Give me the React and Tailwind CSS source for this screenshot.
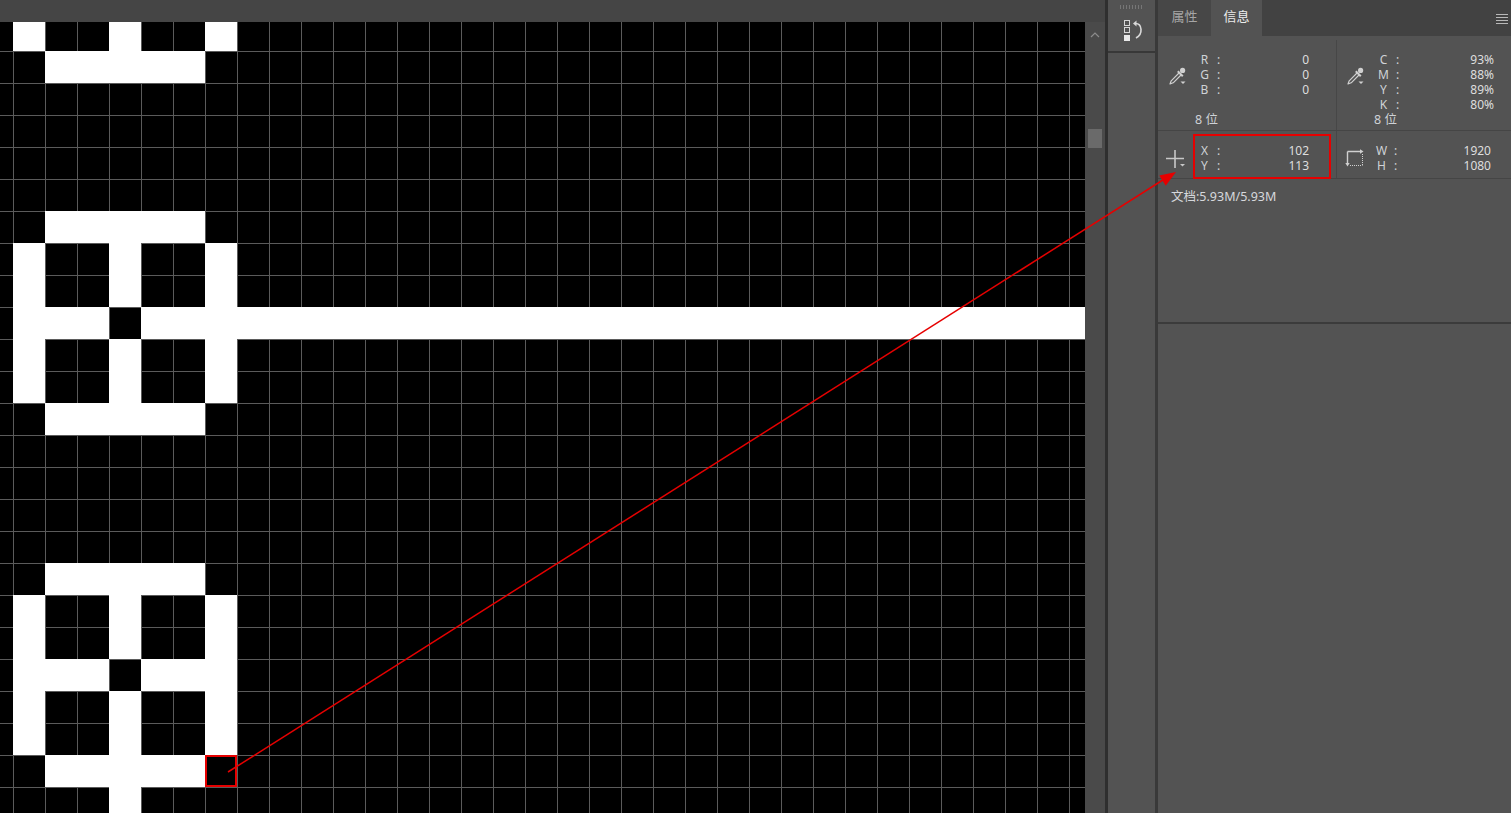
import React from 'react';

// 像素网格：每格 32px，第 0 列起于 x=13，第 0 行起于 y=19（画布内 y=-3）
const A = [[0, 1], [3, 1], [6, 1]];
const whiteRows = [
    [0, A],
    [1, [[1, 5]]],
    [6, [[1, 5]]],
    [7, A],
    [8, A],
    [9, [[0, 3]]],
    [10, A],
    [11, A],
    [12, [[1, 5]]],
    [17, [[1, 5]]],
    [18, A],
    [19, A],
    [20, [[0, 3], [4, 3]]],
    [21, A],
    [22, A],
    [23, [[1, 5]]],
    [24, [[3, 1]]],
];

const PixelCanvas = () => (
    <svg width="1085" height="791" className="block">
        <defs>
            <pattern id="grid" width="32" height="32" patternUnits="userSpaceOnUse" x="13" y="29">
                <path d="M0 0.5H32M0.5 0V32" stroke="#5b5b5b" strokeWidth="1" fill="none" />
            </pattern>
        </defs>
        <rect width="1085" height="791" fill="#000" />
        <rect width="1085" height="791" fill="url(#grid)" />
        {whiteRows.map(([r, spans]) =>
            spans.map(([c, n]) => (
                <rect key={`${r}-${c}`} x={13 + 32 * c} y={32 * r - 3} width={32 * n} height="32" fill="#fff" />
            ))
        )}
        {/* 横贯的白条 */}
        <rect x="141" y="285" width="944" height="32" fill="#fff" />
    </svg>
);

const Eyedropper = () => (
    <svg width="20" height="20" viewBox="0 0 20 20" className="block">
        <path d="M12.5 6.5L4.2 14.8L3 18L6.2 16.8L14.5 8.5" stroke="#d0d0d0" strokeWidth="1.2" fill="none" strokeLinejoin="round" />
        <path d="M10.8 5.2L15.8 10.2" stroke="#d0d0d0" strokeWidth="2" />
        <circle cx="15.6" cy="4.4" r="2.6" fill="#d0d0d0" />
        <path d="M13.5 15.5h5l-2.5 2.5z" fill="#d0d0d0" />
    </svg>
);

const Crosshair = () => (
    <svg width="22" height="20" viewBox="0 0 22 20" className="block">
        <path d="M0 8.5H18M9 0V18" stroke="#c8c8c8" strokeWidth="1.6" />
        <path d="M14 14h5l-2.5 2.5z" fill="#c8c8c8" />
    </svg>
);

const SizeIcon = () => (
    <svg width="22" height="20" viewBox="0 0 22 20" className="block">
        <path d="M2.5 3.5H16M2.5 3.5V16" stroke="#d0d0d0" strokeWidth="1.4" fill="none" />
        <path d="M15 1.3L18.5 3.5L15 5.7z" fill="#d0d0d0" />
        <path d="M0.3 15L2.5 18.5L4.7 15z" fill="#d0d0d0" />
        <path d="M17.5 6V17.5M5 17.5H17.5" stroke="#d0d0d0" strokeWidth="1" strokeDasharray="1 1" fill="none" />
    </svg>
);

const HistoryIcon = () => (
    <svg width="26" height="26" viewBox="0 0 26 26" className="block">
        <rect x="4.5" y="2.5" width="5" height="5" stroke="#d8d8d8" strokeWidth="1" fill="none" />
        <rect x="4.5" y="9.5" width="5" height="5" stroke="#d8d8d8" strokeWidth="1" fill="none" />
        <rect x="4" y="17" width="6" height="6" fill="#e8e8e8" />
        <path d="M15.5 5.5C22 5.5 23.5 16 16 20" stroke="#d8d8d8" strokeWidth="1.6" fill="none" />
        <path d="M13 5.5L16.5 2.5V8.5z" fill="#d8d8d8" />
    </svg>
);

const Row = ({ label, value, box = 15 }) => (
    <div className="flex h-[15px] leading-[15px]">
        <span className="text-center" style={{ width: box }}>{label}</span>
        <span className="ml-[5px]">:</span>
        <span className="ml-auto text-[#dedede]">{value}</span>
    </div>
);

const Bits = () => <div className="-ml-[2px] h-[15px] text-[12.5px] leading-[15px]">8 位</div>;

const App = () => {
    return (
        <div className="relative flex h-[813px] w-[1511px] overflow-hidden bg-[#535353] font-['Noto_Sans','Noto_Sans_CJK_SC',sans-serif] text-[12px] text-[#cfd2d6]">
            {/* 画布 + 滚动条 */}
            <div className="flex w-[1105px] flex-col">
                <div className="h-[22px] bg-[#454545]" />
                <div className="flex flex-1">
                    <div className="w-[1085px] bg-black">
                        <PixelCanvas />
                    </div>
                    <div className="flex w-[20px] flex-col items-center bg-[#4a4a4a] pt-[10px]">
                        <svg width="10" height="6" viewBox="0 0 10 6" className="block">
                            <path d="M1 5L5 1L9 5" stroke="#8c8c8c" strokeWidth="1.2" fill="none" />
                        </svg>
                        <div className="mt-[91px] h-[19px] w-[14px] bg-[#6a6a6a]" />
                    </div>
                </div>
            </div>
            <div className="w-[3px] bg-[#2f2f2f]" />

            {/* 面板停靠栏 */}
            <div className="flex w-[47px] flex-col">
                <div className="h-[53px] border-b-2 border-[#383838] pl-[12px] pt-[5px]">
                    <div className="flex h-[4px] gap-[2px]">
                        {Array.from({ length: 8 }, (_, i) => (
                            <div key={i} className="h-[4px] w-[1px] bg-[#767676]" />
                        ))}
                    </div>
                    <div className="mt-[9px]">
                        <HistoryIcon />
                    </div>
                </div>
                <div className="flex-1 bg-[#535353]" />
            </div>
            <div className="w-[3px] bg-[#393939]" />

            {/* 信息面板 */}
            <div className="flex flex-1 flex-col">
                <div className="h-[324px] border-b-2 border-[#3b3b3b]">
                    <div className="flex h-[36px] bg-[#424242] text-[13px]">
                        <div className="flex w-[53px] items-center justify-center bg-[#474747] pb-[2px] text-[#a6a6a6]">属性</div>
                        <div className="flex w-[51px] items-center justify-center bg-[#535353] pb-[2px] text-[#ececec]">信息</div>
                        <div className="flex-1" />
                        <div className="flex flex-col gap-[2px] pr-[3px] pt-[14px]">
                            {[0, 1, 2, 3].map(i => (
                                <div key={i} className="h-[1px] w-[12px] bg-[#b8b8b8]" />
                            ))}
                        </div>
                    </div>

                    {/* RGB / CMYK */}
                    <div className="flex h-[95px] border-b border-[#454545] pt-[4px]">
                        <div className="flex w-[179px] border-r border-[#474747]">
                            <div className="w-[39px] pl-[9px] pt-[26px]"><Eyedropper /></div>
                            <div className="w-[112px] pt-[12px]">
                                <Row label="R" value="0" />
                                <Row label="G" value="0" />
                                <Row label="B" value="0" />
                                <div className="h-[15px]" />
                                <Bits />
                            </div>
                        </div>
                        <div className="flex flex-1">
                            <div className="w-[39px] pl-[8px] pt-[26px]"><Eyedropper /></div>
                            <div className="w-[118px] pt-[12px]">
                                <Row label="C" value="93%" />
                                <Row label="M" value="88%" />
                                <Row label="Y" value="89%" />
                                <Row label="K" value="80%" />
                                <Bits />
                            </div>
                        </div>
                    </div>

                    {/* XY / WH */}
                    <div className="flex h-[48px] border-b border-[#454545]">
                        <div className="flex w-[179px] border-r border-[#474747]">
                            <div className="w-[39px] pl-[8px] pt-[19px]"><Crosshair /></div>
                            <div className="w-[112px] pt-[12px]">
                                <Row label="X" value="102" />
                                <Row label="Y" value="113" />
                            </div>
                        </div>
                        <div className="flex flex-1">
                            <div className="w-[37px] pl-[8px] pt-[17px]"><SizeIcon /></div>
                            <div className="w-[117px] pt-[12px]">
                                <Row label="W" value="1920" />
                                <Row label="H" value="1080" />
                            </div>
                        </div>
                    </div>

                    <div className="pl-[13px] pt-[9px] text-[12.5px] leading-[17px] text-[#d6d8dc]">文档:5.93M/5.93M</div>
                </div>
                <div className="flex-1 bg-[#535353]" />
            </div>

            {/* 红色标注 */}
            <svg width="1511" height="813" className="pointer-events-none absolute left-0 top-0">
                <rect x="206" y="756" width="30" height="30" stroke="#e60000" strokeWidth="2" fill="none" />
                <line x1="228" y1="772" x2="1166" y2="178" stroke="#e60000" strokeWidth="1.5" />
                <path d="M1176 172L1165.7 185.7L1159.3 175.5z" fill="#e60000" />
                <rect x="1194" y="135" width="136" height="43" stroke="#e60000" strokeWidth="2" fill="none" />
            </svg>
        </div>
    );
};

export default App;
